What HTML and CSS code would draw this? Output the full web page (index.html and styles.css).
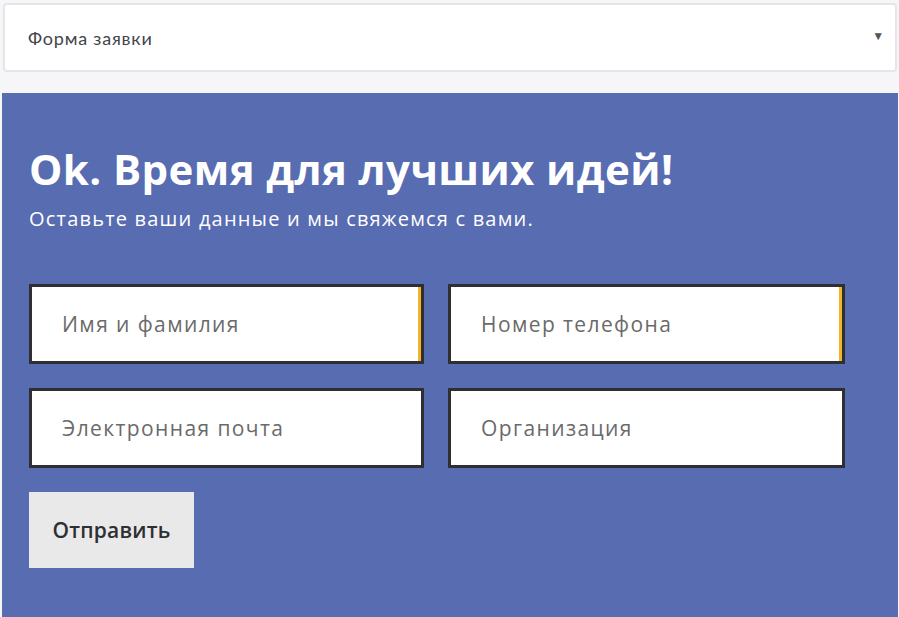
FILE: index.html
```html
<!DOCTYPE html>
<html lang="ru">
<head>
    <meta charset="UTF-8">
    <meta name="viewport" content="width=device-width, initial-scale=1.0">
    <title>Форма заявки</title>
    <link rel="stylesheet" href="styles.css">
</head>
<body>
    <div class="picker">
        <div class="picker-box">
            <span>Форма заявки</span>
            <span class="arrow">&#9660;</span>
        </div>
    </div>

    <div class="form-block">
        <h1>Ok. Время для лучших идей!</h1>
        <p class="lead">Оставьте ваши данные и мы свяжемся с вами.</p>

        <div class="fields">
            <input type="text" class="field marked" placeholder="Имя и фамилия">
            <input type="text" class="field marked" placeholder="Номер телефона">
            <input type="text" class="field" placeholder="Электронная почта">
            <input type="text" class="field" placeholder="Организация">
        </div>

        <button class="send">Отправить</button>
    </div>
</body>
</html>
```

FILE: styles.css
```css
body {
    margin: 0;
    background-color: #f6f6f9;
    font-family: "Open Sans", "Liberation Sans", sans-serif;
}
.picker {
    padding: 3px 2px 0 3px;
}
.picker-box {
    height: 65px;
    display: flex;
    align-items: center;
    justify-content: space-between;
    padding: 0 10px 0 23px;
    background-color: #fff;
    border: 2px solid #e6e6e9;
    border-radius: 4px;
    font-family: "Lato", sans-serif;
    font-size: 18px;
    letter-spacing: 0.8px;
    color: #44444c;
}
.arrow {
    font-size: 12px;
    color: #555;
    margin-top: -4px;
}
.form-block {
    margin: 21px 1px 0 2px;
    height: 524px;
    box-sizing: border-box;
    padding: 48px 28px 0 27px;
    background-color: #586cb2;
    color: #fff;
}
h1 {
    margin: 0;
    font-size: 42px;
    font-weight: 700;
    line-height: 56px;
    letter-spacing: 0.4px;
}
.lead {
    margin: 9px 0 0;
    font-size: 20px;
    line-height: 26px;
    letter-spacing: 1.2px;
}
.fields {
    display: grid;
    grid-template-columns: 395px 397px;
    column-gap: 24px;
    row-gap: 24px;
    margin-top: 52px;
}
.field {
    height: 80px;
    box-sizing: border-box;
    border: 3px solid #2e2e33;
    padding: 0 30px;
    font-family: "Open Sans", sans-serif;
    font-size: 21px;
    letter-spacing: 1.4px;
    color: #333;
    background-color: #fff;
    outline: none;
}
.field::placeholder {
    color: #6a6a6a;
}
.marked {
    box-shadow: inset -3px 0 0 #f2b52a;
}
.send {
    margin-top: 24px;
    width: 165px;
    height: 76px;
    border: none;
    background-color: #e9e9e9;
    font-family: "Open Sans", sans-serif;
    font-size: 21px;
    font-weight: 600;
    letter-spacing: 0.2px;
    color: #2f2f33;
    cursor: pointer;
}
```
